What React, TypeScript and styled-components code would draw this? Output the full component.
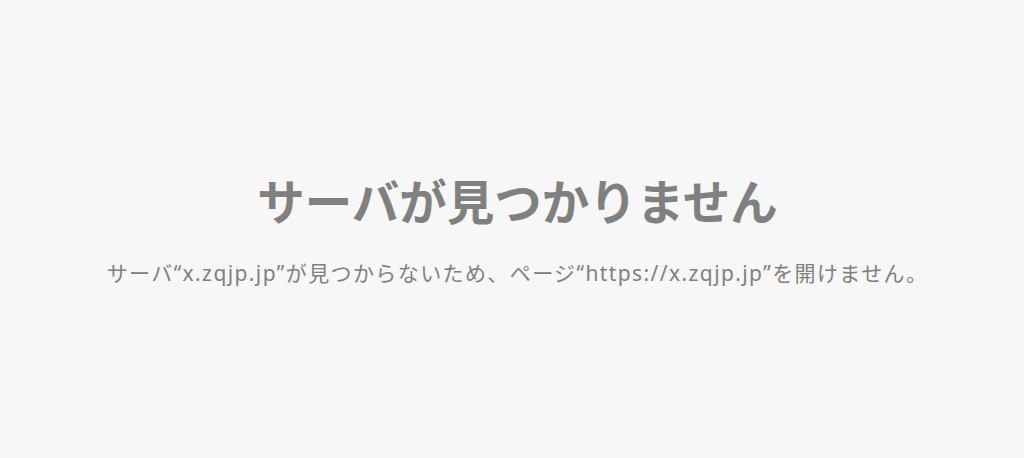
import styled, { createGlobalStyle } from "styled-components";

const GlobalStyle = createGlobalStyle`
  html, body {
    margin: 0;
    padding: 0;
    height: 100%;
    background: #f7f7f7;
  }
  #root {
    height: 100%;
  }
`;

const Page = styled.main`
  height: 100vh;
  box-sizing: border-box;
  display: flex;
  flex-direction: column;
  align-items: center;
  padding: 167px 0 0 11px;
  font-family: "Noto Sans", "Noto Sans CJK JP", sans-serif;
  color: #808080;
`;

const Title = styled.h1`
  margin: 0;
  font-size: 47.5px;
  line-height: 66px;
  font-weight: 700;
  font-family: "Noto Sans CJK JP", sans-serif;
`;

const Message = styled.p`
  margin: 25px 0 0;
  font-size: 21px;
  line-height: 30px;
  font-weight: 400;
  letter-spacing: 1.4px;
`;

export default function App() {
  return (
    <>
      <GlobalStyle />
      <Page>
        <Title>サーバが見つかりません</Title>
        <Message>
          サーバ“x.zqjp.jp”が見つからないため、ページ“https://x.zqjp.jp”を開けません。
        </Message>
      </Page>
    </>
  );
}
